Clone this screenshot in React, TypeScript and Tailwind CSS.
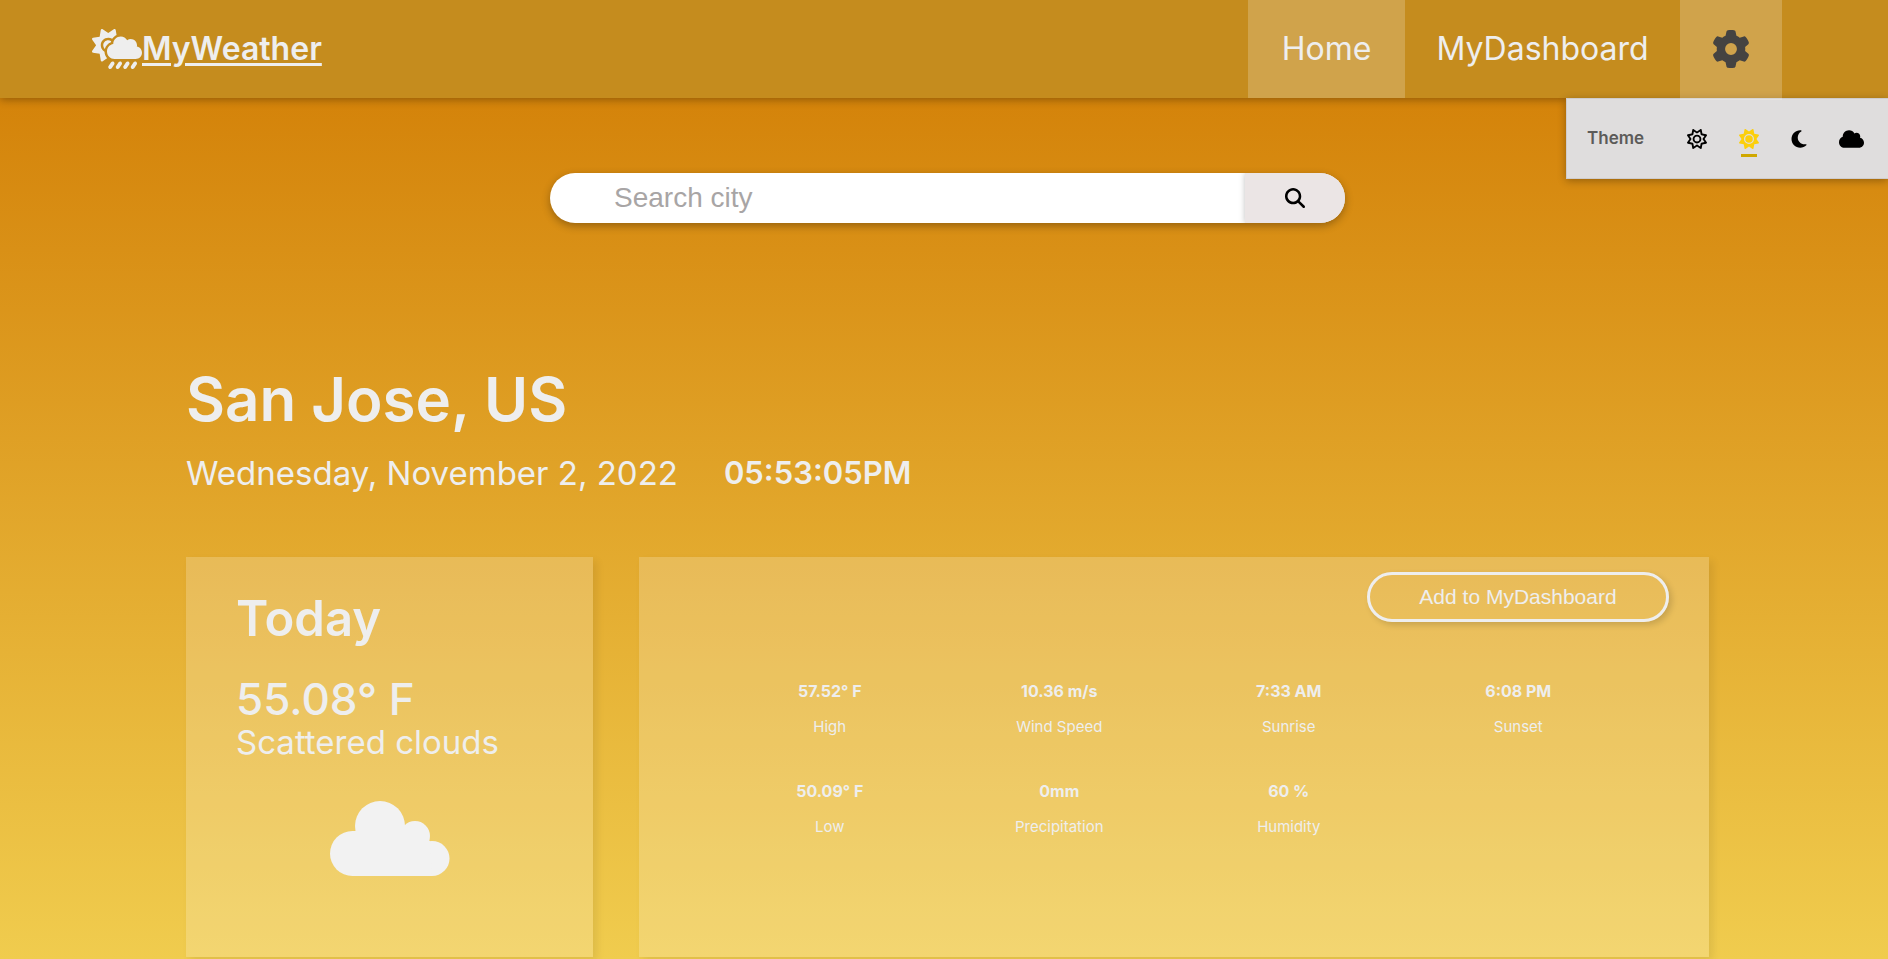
import { FaCloud, FaCloudSunRain, FaGear, FaMagnifyingGlass, FaMoon, FaRegSun, FaSun } from "react-icons/fa6";

const stats = [
  { value: "57.52° F", label: "High" },
  { value: "10.36 m/s", label: "Wind Speed" },
  { value: "7:33 AM", label: "Sunrise" },
  { value: "6:08 PM", label: "Sunset" },
  { value: "50.09° F", label: "Low" },
  { value: "0mm", label: "Precipitation" },
  { value: "60 %", label: "Humidity" },
];

function Header() {
  return (
    <header className="relative z-10 flex h-[98px] items-center justify-between bg-[#c58c1e] pr-[106px] pl-[92px] shadow-[0_2px_8px_rgba(0,0,0,0.3)]">
      <a href="#home" className="flex items-center text-[32px] leading-10 font-semibold">
        <FaCloudSunRain className="h-10 w-[50px]" />
        <span className="underline decoration-[3px] underline-offset-[3px]">MyWeather</span>
      </a>
      <nav className="flex h-full items-stretch text-[32px]">
        <a href="#home" className="flex w-[157px] items-center justify-center bg-white/20">Home</a>
        <a href="#dashboard" className="flex w-[275px] items-center justify-center">MyDashboard</a>
        <button aria-label="Settings" className="relative z-10 -mb-[2px] flex w-[102px] items-center justify-center bg-white/20 pb-[2px] text-[#454341]">
          <FaGear className="size-[38px]" />
        </button>
      </nav>
      <ThemePanel />
    </header>
  );
}

function ThemePanel() {
  return (
    <div className="absolute top-full right-0 flex h-[81px] w-[322px] items-center border border-r-0 border-[#cfcccc] bg-[#dfdddd] pr-6 pl-5 text-black shadow-[0_2px_8px_rgba(0,0,0,0.3)]">
      <span className="flex-1 text-[17px] font-semibold text-[#5c5b59]">Theme</span>
      <div className="flex items-center gap-8">
        <button aria-label="Default theme"><FaRegSun className="size-5" /></button>
        <button aria-label="Sunny theme" className="relative text-[#fccf0b]">
          <FaSun className="size-5" />
          <span className="absolute top-[25px] left-[2px] h-[3px] w-4 bg-[#d0a800]" />
        </button>
        <button aria-label="Night theme"><FaMoon className="h-5 w-4" /></button>
        <button aria-label="Cloudy theme"><FaCloud className="h-5 w-[25px]" /></button>
      </div>
    </div>
  );
}

function SearchBar() {
  return (
    <form className="mx-auto flex h-[50px] w-[795px] max-w-full overflow-hidden rounded-[25px] bg-white shadow-[0_3px_8px_rgba(0,0,0,0.3)]">
      <input
        type="text"
        aria-label="Search city"
        placeholder="Search city"
        className="min-w-0 flex-1 pl-16 font-['Liberation_Sans',sans-serif] text-[28px] text-black outline-none placeholder:text-[#a8a5a5]"
      />
      <button type="button" aria-label="Search" className="flex w-[100px] items-center justify-center bg-[#ebe5e5] text-black shadow-[0_0_6px_rgba(0,0,0,0.25)]">
        <FaMagnifyingGlass className="size-5" />
      </button>
    </form>
  );
}

function CloudIcon() {
  return (
    <svg viewBox="0 0 120 76" className="mx-auto mt-[42px] h-[76px] w-[120px] fill-[#f2f2f2]" aria-hidden="true">
      <circle cx="50" cy="25" r="25" />
      <circle cx="85" cy="35" r="15" />
      <circle cx="22.5" cy="52.5" r="22.5" />
      <circle cx="102" cy="57.5" r="17.5" />
      <path d="M22 30h28V10l24 14 11 11 15 5 2 35H22z" />
    </svg>
  );
}

export default function App() {
  return (
    <div className="min-h-screen bg-[linear-gradient(#d4830a_10%,#f0cc4e)] font-[Inter,sans-serif] text-[#eee]">
      <Header />
      <main className="pt-[75px] pr-[179px] pl-[186px]">
        <SearchBar />
        <section className="mt-[138px]">
          <h1 className="text-[60px] leading-[76px] font-semibold">San Jose, US</h1>
          <div className="mt-4 flex gap-[46px] leading-[40px]">
            <p className="text-[33px]">Wednesday, November 2, 2022</p>
            <p className="text-[31px] font-semibold">05:53:05PM</p>
          </div>
        </section>
        <div className="mt-16 flex gap-[46px]">
          <section className="h-[400px] w-[407px] shrink-0 bg-white/20 px-[50px] pt-8 shadow-[4px_4px_8px_rgba(0,0,0,0.08)]">
            <h2 className="text-[49px] leading-[60px] font-semibold">Today</h2>
            <p className="mt-6 text-[44px] leading-[52px] font-medium">55.08° F</p>
            <p className="text-[33px] leading-[34px]">Scattered clouds</p>
            <CloudIcon />
          </section>
          <section className="flex h-[400px] flex-1 flex-col bg-white/20 pt-[15px] shadow-[4px_4px_8px_rgba(0,0,0,0.08)]">
            <button className="mr-10 h-[50px] w-[302px] self-end rounded-[25px] border-[3px] border-[#eee] font-['Liberation_Sans',sans-serif] text-[21px] shadow-[3px_3px_6px_rgba(0,0,0,0.15)]">
              Add to MyDashboard
            </button>
            <dl className="mt-[54px] grid grid-cols-4 gap-y-[36px] px-[76px] text-center">
              {stats.map((s) => (
                <div key={s.label} className="flex flex-col-reverse gap-2">
                  <dt className="text-[15px] leading-[26px]">{s.label}</dt>
                  <dd className="text-base leading-[30px] font-bold">{s.value}</dd>
                </div>
              ))}
            </dl>
          </section>
        </div>
      </main>
    </div>
  );
}
